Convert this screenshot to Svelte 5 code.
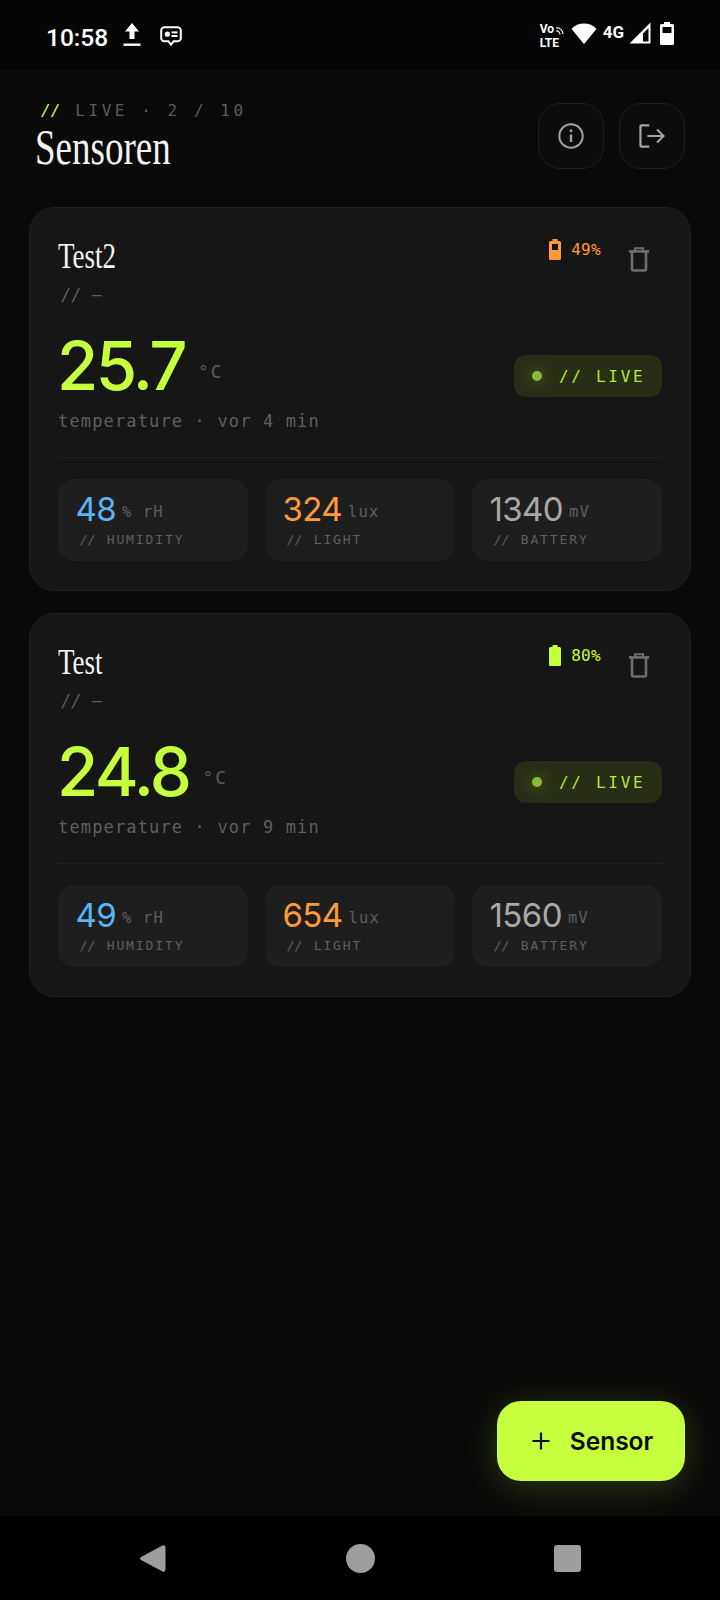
<script>
	const sensors = [
		{
			name: "Test2",
			battery: 49,
			batteryColor: "#ff9a3c",
			temp: "25.7",
			ago: "vor 4 min",
			humidity: 48,
			light: 324,
			mv: 1340
		},
		{
			name: "Test",
			battery: 80,
			batteryColor: "#c6ff3d",
			temp: "24.8",
			ago: "vor 9 min",
			humidity: 49,
			light: 654,
			mv: 1560
		}
	];
</script>

<div class="screen">
	<div class="statusbar">
		<div class="status-left">
			<span class="time">10:58</span>
			<svg class="upload" width="18" height="24" viewBox="0 0 18 24">
				<path d="M9 0 L16 8.5 H11.5 V16 H6.5 V8.5 H2 Z" fill="#fff" />
				<rect x="0.5" y="20.5" width="17" height="2.4" fill="#fff" />
			</svg>
			<svg class="msg" width="22" height="21" viewBox="0 0 22 21">
				<path d="M4.5 1.2 H17.5 A3.3 3.3 0 0 1 20.8 4.5 V12 A3.3 3.3 0 0 1 17.5 15.3 H13.6 L11 18.6 L8.4 15.3 H4.5 A3.3 3.3 0 0 1 1.2 12 V4.5 A3.3 3.3 0 0 1 4.5 1.2 Z" fill="none" stroke="#fff" stroke-width="2" />
				<circle cx="7.4" cy="8.2" r="2.6" fill="#fff" />
				<rect x="11.5" y="5.4" width="6" height="2" fill="#fff" />
				<rect x="11.5" y="9" width="6" height="2" fill="#fff" />
			</svg>
		</div>
		<div class="status-right">
			<div class="volte">
				<span>Vo</span>
				<span>LTE</span>
				<svg class="volte-waves" width="10" height="10" viewBox="0 0 10 10">
					<path d="M1 3 A6 6 0 0 1 8 9 M1 6 A3.5 3.5 0 0 1 5 9.5" fill="none" stroke="#fff" stroke-width="1.2" />
				</svg>
			</div>
			<svg width="26" height="21" viewBox="0 0 26 21">
				<path d="M13 21 L0.5 6 C4 2.4 8 0.6 13 0.6 C18 0.6 22 2.4 25.5 6 Z" fill="#fff" />
			</svg>
			<span class="fourg">4G</span>
			<svg width="22" height="22" viewBox="0 0 22 22">
				<path d="M0.5 21.5 L21.5 0.5 V21.5 Z M14 19.5 H19.5 V6 L14 11.5 Z" fill="#fff" fill-rule="evenodd" />
			</svg>
			<svg width="14" height="23" viewBox="0 0 14 23">
				<path d="M4 0 H10 V2 H12.5 A1.5 1.5 0 0 1 14 3.5 V21.5 A1.5 1.5 0 0 1 12.5 23 H1.5 A1.5 1.5 0 0 1 0 21.5 V3.5 A1.5 1.5 0 0 1 1.5 2 H4 Z M2.5 5 V11 H11.5 V5 Z" fill="#fff" fill-rule="evenodd" />
			</svg>
		</div>
	</div>

	<main class="page">
		<header class="top">
			<div>
				<div class="eyebrow"><span class="slashes">//</span><span>LIVE · 2 / 10</span></div>
				<h1 class="title">Sensoren</h1>
			</div>
			<div class="top-actions">
				<button class="icon-btn" aria-label="Info">
					<svg width="26" height="26" viewBox="0 0 26 26" fill="none" stroke="#a3a3a0" stroke-width="2">
						<circle cx="13" cy="13" r="11.7" />
						<path d="M13 11.5 V19" stroke-width="2.4" />
						<circle cx="13" cy="7.8" r="1.5" fill="#a3a3a0" stroke="none" />
					</svg>
				</button>
				<button class="icon-btn" aria-label="Abmelden">
					<svg width="26" height="24" viewBox="0 0 28 26" fill="none" stroke="#a3a3a0" stroke-width="2.4">
						<path d="M11 1.5 H2.5 A1 1 0 0 0 1.5 2.5 V23.5 A1 1 0 0 0 2.5 24.5 H11" />
						<path d="M9 13 H26 M19.5 6 L26.5 13 L19.5 20" />
					</svg>
				</button>
			</div>
		</header>

		<section class="cards">
			{#each sensors as s}
				<article class="card">
					<div class="card-head">
						<div>
							<h2 class="name">{s.name}</h2>
							<div class="sub"><span class="sub-sl">//</span> —</div>
						</div>
						<div class="head-right">
							<div class="batt" style="color: {s.batteryColor}">
								<svg width="12" height="21" viewBox="0 0 12 21">
									{#if s.battery > 60}
										<path d="M3.5 0 H8.5 V2 H10.5 A1.5 1.5 0 0 1 12 3.5 V19.5 A1.5 1.5 0 0 1 10.5 21 H1.5 A1.5 1.5 0 0 1 0 19.5 V3.5 A1.5 1.5 0 0 1 1.5 2 H3.5 Z" fill="currentColor" />
									{:else}
										<path d="M3.5 0 H8.5 V2 H10.5 A1.5 1.5 0 0 1 12 3.5 V19.5 A1.5 1.5 0 0 1 10.5 21 H1.5 A1.5 1.5 0 0 1 0 19.5 V3.5 A1.5 1.5 0 0 1 1.5 2 H3.5 Z M3 5 V11 H9 V5 Z" fill="currentColor" fill-rule="evenodd" />
									{/if}
								</svg>
								<span>{s.battery}%</span>
							</div>
							<button class="trash" aria-label="Löschen">
								<svg width="20" height="25" viewBox="0 0 20 25" fill="none" stroke="#6e6e6c" stroke-width="2.6">
									<path d="M0 4.4 H20" />
									<path d="M6 4 V1.3 H14 V4" stroke-width="2" />
									<path d="M3 5 V22 A1.5 1.5 0 0 0 4.5 23.5 H15.5 A1.5 1.5 0 0 0 17 22 V5" />
								</svg>
							</button>
						</div>
					</div>

					<div class="reading">
						<div class="reading-main">
							<span class="temp">{s.temp}</span>
							<span class="temp-unit">°C</span>
						</div>
						<div class="live"><span class="dot"></span><span>// LIVE</span></div>
					</div>
					<div class="meta">temperature · {s.ago}</div>

					<div class="divider"></div>

					<div class="tiles">
						<div class="tile">
							<div class="tile-top"><span class="val blue">{s.humidity}</span><span class="unit">% rH</span></div>
							<div class="label"><span class="lbl-sl">//</span>HUMIDITY</div>
						</div>
						<div class="tile">
							<div class="tile-top"><span class="val orange">{s.light}</span><span class="unit">lux</span></div>
							<div class="label"><span class="lbl-sl">//</span>LIGHT</div>
						</div>
						<div class="tile">
							<div class="tile-top"><span class="val grey">{s.mv}</span><span class="unit">mV</span></div>
							<div class="label"><span class="lbl-sl">//</span>BATTERY</div>
						</div>
					</div>
				</article>
			{/each}
		</section>

		<button class="fab">
			<svg width="18" height="18" viewBox="0 0 18 18"><path d="M9 0.5 V17.5 M0.5 9 H17.5" stroke="#0a0a0a" stroke-width="2.2" /></svg>
			<span>Sensor</span>
		</button>
	</main>

	<nav class="navbar">
		<svg width="29" height="31" viewBox="0 0 29 31">
			<path d="M24.5 2.6 L3 14 A1.7 1.7 0 0 0 3 17 L24.5 28.4 A2 2 0 0 0 27.5 26.6 V4.4 A2 2 0 0 0 24.5 2.6 Z" fill="#9e9e9e" />
		</svg>
		<div class="nav-home"></div>
		<div class="nav-square"></div>
	</nav>
</div>

<style>
	:global(body) {
		background: #0a0a0a;
	}

	.screen {
		width: 720px;
		height: 1600px;
		display: flex;
		flex-direction: column;
		background: #0a0a0a;
		overflow: hidden;
		font-family: "DejaVu Sans Mono", monospace;
	}

	.statusbar {
		height: 70px;
		flex: none;
		box-sizing: border-box;
		padding: 0 46px 0 46px;
		background: #050505;
		display: flex;
		align-items: center;
		justify-content: space-between;
		color: #fff;
	}

	.status-left {
		display: flex;
		align-items: center;
	}

	.time {
		font: 500 24.5px "Roboto", sans-serif;
		margin-top: 4px;
	}

	.upload {
		margin-left: 15px;
	}

	.msg {
		margin-left: 19px;
		margin-top: 2px;
	}

	.status-right {
		display: flex;
		align-items: center;
		margin-top: -4px;
	}

	.volte {
		position: relative;
		width: 24px;
		margin-top: 5px;
		display: flex;
		flex-direction: column;
		font: 700 12px/14px "Roboto", sans-serif;
	}

	.volte-waves {
		position: absolute;
		right: -1px;
		top: 3px;
	}

	.status-right svg:nth-child(2) {
		margin-left: 7px;
	}

	.fourg {
		font: 700 17px "Roboto", sans-serif;
		margin-left: 6px;
		margin-top: -3px;
	}

	.status-right svg:nth-child(4) {
		margin-left: 5px;
	}

	.status-right svg:nth-child(5) {
		margin-left: 9px;
	}

	.page {
		position: relative;
		flex: 1;
		padding: 0 29px;
	}

	.top {
		display: flex;
		justify-content: space-between;
		padding: 32px 6px 0 6px;
		height: 137px;
		box-sizing: border-box;
	}

	.eyebrow {
		display: flex;
		gap: 15px;
		padding-left: 6px;
		font-size: 16px;
		line-height: 18px;
		letter-spacing: 3.55px;
		color: #5c5c5a;
	}

	.slashes {
		color: #c6ff3d;
		letter-spacing: 0;
		font-style: italic;
	}

	.title {
		margin: 1px 0 0;
		font: 400 50px/52px "Liberation Serif", serif;
		color: #f4f4f0;
		transform: scaleX(0.74);
		transform-origin: left center;
		white-space: nowrap;
	}

	.top-actions {
		display: flex;
		gap: 15px;
		padding-top: 1px;
	}

	.icon-btn {
		width: 66px;
		height: 66px;
		padding: 0;
		display: flex;
		align-items: center;
		justify-content: center;
		background: #0d0d0d;
		border: 1.5px solid #202020;
		border-radius: 22px;
	}

	.cards {
		display: flex;
		flex-direction: column;
		gap: 22px;
	}

	.card {
		box-sizing: border-box;
		height: 384px;
		padding: 28px 28px 0;
		background: #161616;
		border: 1.5px solid #212121;
		border-radius: 26px;
	}

	.card-head {
		display: flex;
		justify-content: space-between;
		height: 92px;
	}

	.name {
		margin: 0;
		font: 400 36px/40px "Liberation Serif", serif;
		color: #f4f4f0;
		transform: scaleX(0.75);
		transform-origin: left center;
	}

	.sub {
		margin-top: 9px;
		padding-left: 3px;
		font-size: 17px;
		line-height: 20px;
		color: #5c5c5a;
	}

	.sub-sl {
		font-style: italic;
	}

	.head-right {
		display: flex;
		align-items: flex-start;
		gap: 28px;
	}

	.batt {
		display: flex;
		align-items: center;
		gap: 10px;
		font-size: 16px;
		letter-spacing: 0.3px;
		line-height: 21px;
		padding-top: 3px;
	}

	.trash {
		padding: 0;
		margin: 11px 13px 0 0;
		background: none;
		border: none;
		display: flex;
	}

	.reading {
		display: flex;
		justify-content: space-between;
		align-items: center;
		height: 75px;
	}

	.reading-main {
		display: flex;
		align-items: flex-start;
		margin-left: -1px;
	}

	.temp {
		font: 500 67px/75px "Inter", sans-serif;
		letter-spacing: -2.6px;
		color: #c6ff3d;
	}

	.temp-unit {
		margin: 34px 0 0 13px;
		font-size: 18px;
		line-height: 20px;
		letter-spacing: 2px;
		color: #5c5c5a;
	}

	.live {
		box-sizing: border-box;
		width: 148px;
		height: 42px;
		margin-top: 21px;
		padding-left: 18px;
		display: flex;
		align-items: center;
		gap: 17px;
		background: #2a3016;
		border-radius: 12px;
		color: #c6ff3d;
		font-size: 16px;
		letter-spacing: 2.7px;
		opacity: 0.9;
	}

	.dot {
		width: 10px;
		height: 10px;
		border-radius: 50%;
		background: #9bcb3c;
		box-shadow: 0 0 14px 3px #9bcb3c40;
	}

	.meta {
		margin-top: 6px;
		height: 48px;
		font-size: 17px;
		line-height: 24px;
		letter-spacing: 1.15px;
		color: #5f5f5d;
	}

	.divider {
		height: 1px;
		background: #212121;
	}

	.tiles {
		margin-top: 21px;
		display: grid;
		grid-template-columns: repeat(3, 1fr);
		gap: 17px;
	}

	.tile {
		box-sizing: border-box;
		height: 82px;
		padding: 12px 17px 0 17.5px;
		background: #1e1e1e;
		border-radius: 16px;
	}

	.tile-top {
		display: flex;
		align-items: center;
		gap: 6px;
	}

	.val {
		font: 400 33px/36px "Inter", sans-serif;
		letter-spacing: -0.6px;
	}

	.blue {
		color: #5cb3f5;
	}

	.orange {
		color: #ff9a3c;
	}

	.grey {
		color: #a8a8a5;
	}

	.unit {
		margin-top: 6px;
		font-size: 15.5px;
		letter-spacing: 1.1px;
		color: #5f5f5d;
	}

	.label {
		display: flex;
		gap: 11px;
		margin-top: 5px;
		padding-left: 4.5px;
		font-size: 13px;
		line-height: 16px;
		letter-spacing: 1.9px;
		color: #5f5f5d;
	}

	.lbl-sl {
		letter-spacing: 0;
		font-style: italic;
	}

	.fab {
		position: absolute;
		right: 35px;
		bottom: 35px;
		width: 188px;
		height: 80px;
		padding: 0 0 0 3px;
		display: flex;
		align-items: center;
		justify-content: center;
		gap: 20px;
		border: none;
		border-radius: 24px;
		background: #c6ff3d;
		box-shadow: 0 6px 36px #c6ff3d2e;
		color: #0a0a0a;
		font: 600 24.5px "Inter", sans-serif;
	}

	.navbar {
		height: 84px;
		flex: none;
		background: #000;
		position: relative;
		z-index: 1;
		display: flex;
		align-items: center;
		justify-content: space-between;
		box-sizing: border-box;
		padding: 0 139px 0 138px;
	}

	.nav-home {
		width: 29px;
		height: 29px;
		border-radius: 50%;
		background: #9e9e9e;
	}

	.nav-square {
		width: 27px;
		height: 27px;
		border-radius: 3px;
		background: #9e9e9e;
	}
</style>
